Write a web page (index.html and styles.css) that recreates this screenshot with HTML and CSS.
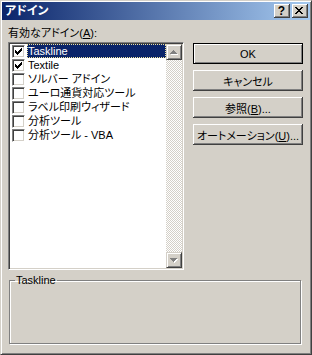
FILE: index.html
```html
<!DOCTYPE html>
<html>
<head>
  <meta charset="utf-8">
  <title>アドイン</title>
  <link rel="stylesheet" href="styles.css">
</head>
<body>
  <div class="window">
    <div class="titlebar">
      <span class="title">アドイン</span>
      <div class="caption-buttons">
        <span class="caption-btn help">?</span>
        <span class="caption-btn close">
          <svg width="8" height="7" viewBox="0 0 8 7" shape-rendering="crispEdges">
            <path fill="#000" d="M0 0h2v1H0z M6 0h2v1H6z M1 1h2v1H1z M5 1h2v1H5z M2 2h4v1H2z M3 3h2v1H3z M2 4h4v1H2z M1 5h2v1H1z M5 5h2v1H5z M0 6h2v1H0z M6 6h2v1H6z"/>
          </svg>
        </span>
      </div>
    </div>

    <div class="content">
      <div class="main">
        <div class="list-col">
          <div class="list-label">有効なアドイン(<u>A</u>):</div>
          <div class="listbox">
            <ul class="items">
              <li class="item selected">
                <span class="check"><svg width="7" height="7" viewBox="0 0 7 7" shape-rendering="crispEdges"><path fill="#000" d="M0 2h1v3H0z M1 3h1v3H1z M2 4h1v3H2z M3 3h1v3H3z M4 2h1v3H4z M5 1h1v3H5z M6 0h1v3H6z"/></svg></span>
                <span class="name">Taskline</span>
              </li>
              <li class="item">
                <span class="check"><svg width="7" height="7" viewBox="0 0 7 7" shape-rendering="crispEdges"><path fill="#000" d="M0 2h1v3H0z M1 3h1v3H1z M2 4h1v3H2z M3 3h1v3H3z M4 2h1v3H4z M5 1h1v3H5z M6 0h1v3H6z"/></svg></span>
                <span class="name">Textile</span>
              </li>
              <li class="item"><span class="check"></span><span class="name">ソルバー アドイン</span></li>
              <li class="item"><span class="check"></span><span class="name">ユーロ通貨対応ツール</span></li>
              <li class="item"><span class="check"></span><span class="name">ラベル印刷ウィザード</span></li>
              <li class="item"><span class="check"></span><span class="name">分析ツール</span></li>
              <li class="item"><span class="check"></span><span class="name">分析ツール - VBA</span></li>
            </ul>
            <div class="scrollbar">
              <div class="scroll-btn">
                <svg width="8" height="5" viewBox="0 0 8 5" shape-rendering="crispEdges">
                  <path fill="#fff" d="M4 1h1v1H4z M3 2h3v1H3z M2 3h5v1H2z M1 4h7v1H1z"/>
                  <path fill="#808080" d="M3 0h1v1H3z M2 1h3v1H2z M1 2h5v1H1z M0 3h7v1H0z"/>
                </svg>
              </div>
              <div class="track"></div>
              <div class="scroll-btn">
                <svg width="8" height="5" viewBox="0 0 8 5" shape-rendering="crispEdges">
                  <path fill="#fff" d="M1 1h7v1H1z M2 2h5v1H2z M3 3h3v1H3z M4 4h1v1H4z"/>
                  <path fill="#808080" d="M0 0h7v1H0z M1 1h5v1H1z M2 2h3v1H2z M3 3h1v1H3z"/>
                </svg>
              </div>
            </div>
          </div>
        </div>

        <div class="buttons">
          <button class="button default">OK</button>
          <button class="button">キャンセル</button>
          <button class="button">参照(<u>B</u>)...</button>
          <button class="button">オートメーション(<u>U</u>)...</button>
        </div>
      </div>

      <fieldset class="group">
        <legend>Taskline</legend>
      </fieldset>
    </div>
  </div>
</body>
</html>
```

FILE: styles.css
```css
body {
  margin: 0;
  font-family: "Liberation Sans", "Noto Sans CJK JP", sans-serif;
  font-size: 11px;
  font-feature-settings: "palt" 1;
  color: #000;
}

.window {
  width: 312px;
  height: 355px;
  box-sizing: border-box;
  background: #d4d0c8;
  border: 1px solid;
  border-color: #d4d0c8 #404040 #404040 #d4d0c8;
  box-shadow: inset 1px 1px #fff, inset -1px -1px #808080;
  padding: 1px;
  display: flex;
  flex-direction: column;
}

/* title bar */
.titlebar {
  height: 18px;
  flex: none;
  background: linear-gradient(to right, #0a246a, #a6caf0);
  display: flex;
  align-items: center;
  justify-content: space-between;
  padding: 0 2px 0 3px;
}

.title {
  color: #fff;
  font-weight: bold;
  font-size: 12px;
  line-height: 14px;
}

.caption-buttons {
  display: flex;
  gap: 2px;
}

.caption-btn {
  width: 16px;
  height: 14px;
  box-sizing: border-box;
  background: #d4d0c8;
  box-shadow: inset -1px -1px #404040, inset 1px 1px #fff, inset -2px -2px #808080;
  display: block;
}

.caption-btn.help {
  font-weight: bold;
  font-size: 12px;
  line-height: 14px;
  text-align: center;
  padding-right: 1px;
}

.caption-btn svg {
  display: block;
  margin: 3px 0 0 3px;
}

/* content */
.content {
  flex: 1;
  padding: 6px 7px 0 6px;
  display: flex;
  flex-direction: column;
}

.main {
  display: flex;
  gap: 9px;
}

.list-col {
  width: 176px;
}

.list-label {
  line-height: 14px;
  height: 14px;
  margin-bottom: 2px;
}

.listbox {
  height: 228px;
  box-sizing: border-box;
  border: 1px solid;
  border-color: #808080 #fff #fff #808080;
  box-shadow: inset 1px 1px #404040, inset -1px -1px #d4d0c8;
  padding: 1px;
  background: #fff;
  display: flex;
}

.items {
  list-style: none;
  margin: 0;
  padding: 0;
  flex: 1;
}

.item {
  display: flex;
  align-items: center;
  height: 14px;
}

.check {
  width: 13px;
  height: 13px;
  box-sizing: border-box;
  margin: 0 2px;
  border: 1px solid;
  border-color: #808080 #fff #fff #808080;
  box-shadow: inset 1px 1px #404040, inset -1px -1px #d4d0c8;
  background: #fff;
  display: flex;
  align-items: center;
  justify-content: center;
}

.check svg {
  display: block;
}

.name {
  flex: 1;
  height: 14px;
  line-height: 14px;
  padding-left: 1px;
  white-space: nowrap;
}

.selected .name {
  background: #0a246a;
  color: #fff;
  outline: 1px dotted #f0e4a0;
  outline-offset: -1px;
}

/* scrollbar */
.scrollbar {
  width: 16px;
  display: flex;
  flex-direction: column;
}

.scroll-btn {
  height: 16px;
  box-sizing: border-box;
  background: #d4d0c8;
  border: 1px solid;
  border-color: #d4d0c8 #404040 #404040 #d4d0c8;
  box-shadow: inset 1px 1px #fff, inset -1px -1px #808080;
  display: flex;
  align-items: center;
  justify-content: center;
}

.scroll-btn svg {
  display: block;
}

.track {
  flex: 1;
  background: repeating-conic-gradient(#fff 0 25%, #d4d0c8 0 50%);
  background-size: 2px 2px;
}

/* buttons */
.buttons {
  padding-top: 17px;
  display: flex;
  flex-direction: column;
  gap: 6px;
}

.button {
  width: 110px;
  height: 21px;
  box-sizing: border-box;
  font: inherit;
  color: #000;
  background: #d4d0c8;
  border: none;
  padding: 0;
  box-shadow: inset -1px -1px #404040, inset 1px 1px #fff, inset -2px -2px #808080;
  white-space: nowrap;
}

.button.default {
  border: 1px solid #000;
  box-shadow: inset 1px 1px #fff, inset -1px -1px #808080;
}

/* group box */
.group {
  height: 71px;
  box-sizing: border-box;
  margin: 3px 2px 0 1px;
  padding: 0;
  border: 1px solid #808080;
  box-shadow: inset 1px 1px #fff, 1px 1px #fff;
}

.group legend {
  margin-left: 5px;
  padding: 0 1px;
  line-height: 14px;
}
```
